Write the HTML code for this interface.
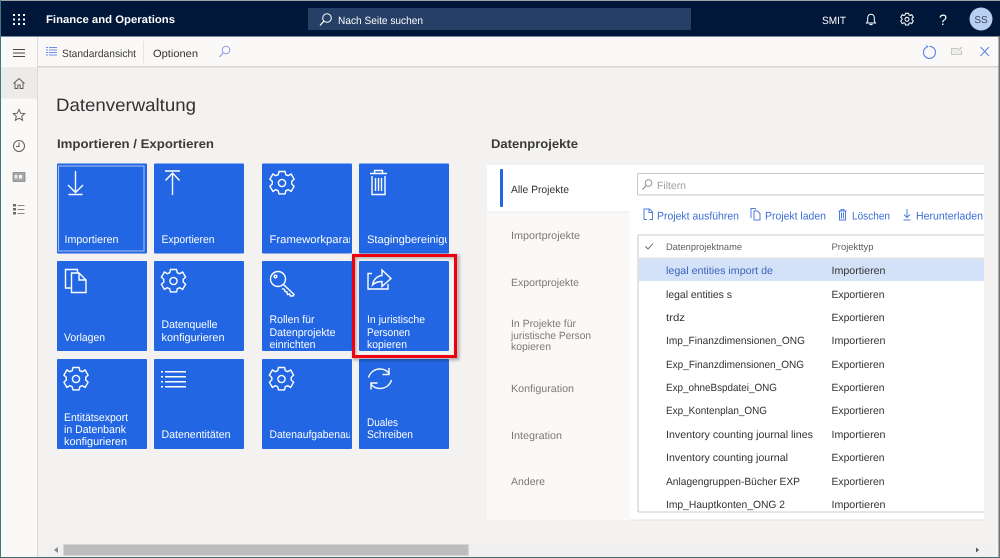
<!DOCTYPE html>
<html><head><meta charset="utf-8"><style>
html,body{margin:0;padding:0;background:#f3f2f1}
svg{display:block;font-family:"Liberation Sans",sans-serif;filter:blur(.3px)}
.w text{fill:#fff;font-size:11px}
.n{fill:#323130;font-size:10.5px}
.t{fill:#7a7876;font-size:10.5px}
.c{fill:#3d6cd6;font-size:11px}
.h{fill:#605e5c;font-size:9.5px}
.i{fill:none;stroke:#fff;stroke-width:1.4}
.s{fill:none;stroke:#605e5c;stroke-width:1}
.b{fill:none;stroke:#4f7ae0;stroke-width:1}
</style></head><body>
<svg width="1000" height="558" viewBox="0 0 1000 558" xmlns="http://www.w3.org/2000/svg" text-rendering="geometricPrecision">
<defs>
<clipPath id="c3"><rect x="262" y="163" width="88" height="90"/></clipPath>
<clipPath id="c4"><rect x="359" y="163" width="88" height="90"/></clipPath>
<clipPath id="c5"><rect x="262" y="359" width="88" height="90"/></clipPath>
<clipPath id="tb"><rect x="638" y="235" width="346" height="277"/></clipPath>
<filter id="sh" x="-20%" y="-20%" width="140%" height="140%"><feGaussianBlur stdDeviation="1.5"/></filter>
<g id="gear" fill="none" stroke="#fff" stroke-width="1.4">
<path d="M-3-11.500h6l.8 3.200 2.400 1 2.900-1.700 3 5.100-2.400 2.300v2.600l2.400 2.300-3 5.100-2.900-1.700-2.400 1-.8 3.200h-6l-.8-3.200-2.400-1-2.900 1.700-3-5.100 2.400-2.300v-2.600l-2.400-2.300 3-5.100 2.900 1.700 2.400-1z"/>
<circle r="3.600"/>
</g>
</defs>

<rect width="1000" height="558" fill="#f3f2f1"/>

<!-- header -->
<rect x="0" y="0" width="1000" height="1" fill="#9aa5a8"/>
<rect x="0" y="1" width="1000" height="35.500" fill="#00173a"/>
<g fill="#fff">
<rect x="13" y="14" width="2" height="2"/><rect x="18" y="14" width="2" height="2"/><rect x="23" y="14" width="2" height="2"/>
<rect x="13" y="18.500" width="2" height="2"/><rect x="18" y="18.500" width="2" height="2"/><rect x="23" y="18.500" width="2" height="2"/>
<rect x="13" y="23" width="2" height="2"/><rect x="18" y="23" width="2" height="2"/><rect x="23" y="23" width="2" height="2"/>
</g>
<text x="46" y="23" fill="#fff" font-size="11" font-weight="bold" textLength="129" lengthAdjust="spacingAndGlyphs">Finance and Operations</text>
<rect x="308" y="8" width="383" height="22" fill="#263f66"/>
<circle cx="327" cy="18" r="4.300" fill="none" stroke="#fff" stroke-width="1"/>
<path d="M323.800 21.200L320 25.500" stroke="#fff" stroke-width="1.200"/>
<text x="338" y="24" fill="#fff" font-size="10.500" textLength="85" lengthAdjust="spacingAndGlyphs">Nach Seite suchen</text>
<text x="822" y="24" fill="#fff" font-size="10.500" textLength="24" lengthAdjust="spacingAndGlyphs">SMIT</text>
<path d="M866.500 23h9l-1.200-2v-3.500a3.300 3.300 0 0 0-6.600 0V21z" fill="none" stroke="#fff" stroke-width="1"/>
<path d="M869.500 24.500h3" stroke="#fff" stroke-width="1.200"/>
<g transform="translate(907 19.300) scale(.52)" fill="none" stroke="#fff" stroke-width="2">
<path d="M-3-11.500h6l.8 3.200 2.400 1 2.900-1.700 3 5.100-2.400 2.300v2.600l2.400 2.300-3 5.100-2.900-1.700-2.400 1-.8 3.200h-6l-.8-3.200-2.400-1-2.900 1.700-3-5.100 2.400-2.300v-2.600l-2.400-2.300 3-5.100 2.900 1.700 2.400-1z"/><circle r="3.800"/></g>
<text x="939" y="25" fill="#fff" font-size="15" textLength="8" lengthAdjust="spacingAndGlyphs">?</text>
<circle cx="981" cy="19" r="11.500" fill="#b9cff2"/>
<text x="981" y="23" fill="#3b4a63" font-size="10" text-anchor="middle">SS</text>

<!-- toolbar -->
<rect x="1" y="36.500" width="999" height="30" fill="#faf9f8"/>
<rect x="37" y="66" width="963" height="1.500" fill="#d6d4d2"/>
<g fill="#6f8fe8"><rect x="46" y="47" width="2" height="1"/><rect x="49" y="47" width="8" height="1"/><rect x="46" y="49.500" width="2" height="1"/><rect x="49" y="49.500" width="8" height="1"/><rect x="46" y="52" width="2" height="1"/><rect x="49" y="52" width="8" height="1"/><rect x="46" y="54.500" width="2" height="1"/><rect x="49" y="54.500" width="8" height="1"/></g>
<text x="62" y="57" fill="#3b3a39" font-size="10.500" textLength="74" lengthAdjust="spacingAndGlyphs">Standardansicht</text>
<rect x="143" y="41" width="1" height="22" fill="#e6e4e2"/>
<text x="153" y="57" fill="#323130" font-size="10.500" textLength="45" lengthAdjust="spacingAndGlyphs">Optionen</text>
<circle cx="226" cy="50" r="3.800" fill="none" stroke="#8f96ea" stroke-width="1"/>
<path d="M223 53L219.500 57" stroke="#8f96ea" stroke-width="1.100"/>
<!-- right toolbar icons -->
<path d="M926 47.500a6 6 0 1 0 3.500-1.100" fill="none" stroke="#5f8ae6" stroke-width="1.200"/>
<path d="M926 45l2.500 1.500-2 2z" fill="#5f8ae6"/>
<path d="M958.500 48.500h-7v6h10v-4" fill="#ececea" stroke="#c9c8c6" stroke-width="1"/>
<path d="M959 50l3-3" stroke="#b8b7b5" stroke-width="1"/>
<path d="M980.500 47l8.500 9M989 47l-8.500 9" stroke="#5f8ae6" stroke-width="1.100"/>

<!-- left nav -->
<rect x="1" y="36.500" width="36" height="521" fill="#faf9f8"/>
<rect x="37" y="36.500" width="1" height="521" fill="#dcdad8"/>
<rect x="1" y="67" width="36" height="31.500" fill="#edebe9"/>
<rect x="13" y="49" width="12" height="1" fill="#4a4948"/><rect x="13" y="52.500" width="12" height="1" fill="#4a4948"/><rect x="13" y="56" width="12" height="1" fill="#4a4948"/>
<path d="M13.500 83.500l5.500-5 5.500 5M15 82v6.500h2.800v-3.500h2.400v3.500H23V82" class="s"/>
<path d="M19 109.500l1.700 3.700 4 .4-3 2.700.9 4-3.600-2.100-3.600 2.100.9-4-3-2.700 4-.4z" class="s"/>
<circle cx="19" cy="146" r="5.500" class="s"/><path d="M19 142.500V146.500h-3" class="s"/>
<rect x="13" y="172.500" width="12" height="9" fill="#a8a8a8" stroke="#6e6d6c" stroke-width=".6"/><rect x="19" y="175" width="3" height="3.500" fill="#faf9f8"/><rect x="14.500" y="175" width="3" height="3.500" fill="#e8e8e8"/>
<g fill="#6e6d6c"><rect x="13" y="204" width="3" height="2.500"/><rect x="13" y="208" width="3" height="2.500"/><rect x="13" y="212" width="3" height="2.500"/></g>
<g fill="#8a8988"><rect x="17.500" y="205" width="7" height="1"/><rect x="17.500" y="209" width="7" height="1"/><rect x="17.500" y="213" width="7" height="1"/></g>

<!-- headings -->
<text x="56" y="111" fill="#323130" font-size="18" textLength="140" lengthAdjust="spacingAndGlyphs">Datenverwaltung</text>
<text x="57" y="148" fill="#3b3a39" font-size="12.500" font-weight="bold" textLength="157" lengthAdjust="spacingAndGlyphs">Importieren / Exportieren</text>
<text x="491" y="148" fill="#3b3a39" font-size="12.500" font-weight="bold" textLength="87" lengthAdjust="spacingAndGlyphs">Datenprojekte</text>

<!-- tiles -->
<g fill="#2266e3">
<rect x="57" y="163.500" width="90" height="90" rx="1"/><rect x="154" y="163.500" width="90" height="90" rx="1"/><rect x="262" y="163.500" width="90" height="90" rx="1"/><rect x="359" y="163.500" width="90" height="90" rx="1"/>
<rect x="57" y="261" width="90" height="90" rx="1"/><rect x="154" y="261" width="90" height="90" rx="1"/><rect x="262" y="261" width="90" height="90" rx="1"/><rect x="359" y="261" width="90" height="90" rx="1"/>
<rect x="57" y="359" width="90" height="90" rx="1"/><rect x="154" y="359" width="90" height="90" rx="1"/><rect x="262" y="359" width="90" height="90" rx="1"/><rect x="359" y="359" width="90" height="90" rx="1"/>
</g>
<rect x="58.500" y="166" width="85.500" height="85" fill="none" stroke="#a9c4f5" stroke-width="1"/>

<g class="w">
<text x="64.500" y="243" textLength="54" lengthAdjust="spacingAndGlyphs">Importieren</text>
<text x="161.500" y="243" textLength="53" lengthAdjust="spacingAndGlyphs">Exportieren</text>
<text x="269.500" y="243" clip-path="url(#c3)" textLength="108" lengthAdjust="spacingAndGlyphs">Frameworkparameter</text>
<text x="367" y="243" clip-path="url(#c4)" textLength="96" lengthAdjust="spacingAndGlyphs">Stagingbereinigung</text>
<text x="64" y="341" textLength="41" lengthAdjust="spacingAndGlyphs">Vorlagen</text>
<text x="161.500" y="328" textLength="56" lengthAdjust="spacingAndGlyphs">Datenquelle</text>
<text x="161.500" y="341" textLength="63" lengthAdjust="spacingAndGlyphs">konfigurieren</text>
<text x="269.500" y="323" textLength="45" lengthAdjust="spacingAndGlyphs">Rollen für</text>
<text x="269.500" y="336" textLength="66" lengthAdjust="spacingAndGlyphs">Datenprojekte</text>
<text x="269.500" y="348" textLength="46" lengthAdjust="spacingAndGlyphs">einrichten</text>
<text x="367" y="323" textLength="58" lengthAdjust="spacingAndGlyphs">In juristische</text>
<text x="367" y="336" textLength="43" lengthAdjust="spacingAndGlyphs">Personen</text>
<text x="367" y="348" textLength="40" lengthAdjust="spacingAndGlyphs">kopieren</text>
<text x="64" y="421" textLength="64" lengthAdjust="spacingAndGlyphs">Entitätsexport</text>
<text x="64" y="433" textLength="62" lengthAdjust="spacingAndGlyphs">in Datenbank</text>
<text x="64" y="445" textLength="63" lengthAdjust="spacingAndGlyphs">konfigurieren</text>
<text x="161.500" y="438" textLength="69" lengthAdjust="spacingAndGlyphs">Datenentitäten</text>
<text x="269.500" y="438" clip-path="url(#c5)" textLength="122" lengthAdjust="spacingAndGlyphs">Datenaufgabenausführung</text>
<text x="367" y="426" textLength="31" lengthAdjust="spacingAndGlyphs">Duales</text>
<text x="367" y="438" textLength="46" lengthAdjust="spacingAndGlyphs">Schreiben</text>
</g>

<!-- tile icons -->
<path class="i" d="M75.500 171v21M68 185l7.500 7.500L83 185M68.500 194.500h14"/>
<path class="i" d="M165 171h15M172.500 195V173M165.500 180.500l7-7.500 7 7.500"/>
<use href="#gear" x="282" y="183"/>
<path class="i" d="M370 173.500h17M372 176v18.500h13V176M375.500 178v13M378.500 178v13M381.500 178v13M374.500 173v-2.500h8v2.500"/>
<path class="i" d="M71.500 288H65.500V269.500H77.500V273M71.500 273H79l7 7v12.500H71.500zM79 273v7h7"/>
<use href="#gear" x="173.500" y="281"/>
<g class="i"><circle cx="278" cy="279" r="7.500"/><circle cx="275.500" cy="276.500" r="1.300"/><path d="M283.500 284.500l10.500 10-1 1.500h-2.500l-1-2-2 .5-.5-2.500-2-.5-.5-2-2.500-1"/></g>
<path class="i" d="M372 273.500h-4v15.500h20v-5M372.500 285c1-6 5-9 9.500-9.500v-5.500l9 8.500-9 8v-5c-4 0-7 1-9.500 3.500z"/>
<use href="#gear" x="76" y="379"/>
<g fill="#fff"><rect x="161" y="371" width="2" height="1.500"/><rect x="165" y="371" width="21" height="1.500"/><rect x="161" y="376" width="2" height="1.500"/><rect x="165" y="376" width="21" height="1.500"/><rect x="161" y="381" width="2" height="1.500"/><rect x="165" y="381" width="21" height="1.500"/><rect x="161" y="386" width="2" height="1.500"/><rect x="165" y="386" width="21" height="1.500"/></g>
<use href="#gear" x="281.500" y="379"/>
<path class="i" d="M368.500 377.500c1.500-5 6-8.500 11.500-8.500 4 0 7.500 2 9.500 5M389 368v6.500h-6.500M391.500 380c-1.500 5-6 8.500-11.500 8.500-4 0-7.500-2-9.500-5M371 389.500V383h6.500"/>

<!-- red highlight -->
<rect x="354.500" y="256.500" width="103" height="102" fill="none" stroke="#000" stroke-opacity=".35" stroke-width="3" filter="url(#sh)"/>
<rect x="353.500" y="255.500" width="102" height="101" fill="none" stroke="#ee0010" stroke-width="3"/>

<!-- right panel -->
<rect x="630" y="165" width="354" height="355" fill="#fff"/>
<rect x="487" y="165" width="143" height="355" fill="#faf9f8"/>
<rect x="487" y="165" width="143" height="47" fill="#fff"/>
<rect x="630" y="519.500" width="354" height="1" fill="#e4e3e1"/>
<rect x="487" y="211.500" width="143" height="1" fill="#e9e8e6"/>
<rect x="500" y="169" width="3" height="38" rx="1" fill="#2266e3"/>
<text x="511" y="193" fill="#323130" font-size="10.500" textLength="58" lengthAdjust="spacingAndGlyphs">Alle Projekte</text>
<text class="t" x="511" y="239" textLength="69" lengthAdjust="spacingAndGlyphs">Importprojekte</text>
<text class="t" x="511" y="286" textLength="68" lengthAdjust="spacingAndGlyphs">Exportprojekte</text>
<text class="t" x="511" y="327" textLength="65" lengthAdjust="spacingAndGlyphs">In Projekte für</text>
<text class="t" x="511" y="339" textLength="80" lengthAdjust="spacingAndGlyphs">juristische Person</text>
<text class="t" x="511" y="350" textLength="40" lengthAdjust="spacingAndGlyphs">kopieren</text>
<text class="t" x="511" y="392" textLength="63" lengthAdjust="spacingAndGlyphs">Konfiguration</text>
<text class="t" x="511" y="439" textLength="51" lengthAdjust="spacingAndGlyphs">Integration</text>
<text class="t" x="511" y="485" textLength="34" lengthAdjust="spacingAndGlyphs">Andere</text>

<!-- filter -->
<path d="M984 173.500H638.500a1 1 0 0 0-1 1V194a1 1 0 0 0 1 1H984" fill="#fff" stroke="#c8c6c4" stroke-width="1"/>
<circle cx="648.500" cy="183" r="3.300" fill="none" stroke="#8a8886" stroke-width=".9"/>
<path d="M646 185.500L642.500 189.500" stroke="#8a8886" stroke-width="1"/>
<text x="657" y="189" fill="#a19f9d" font-size="10.500" textLength="29" lengthAdjust="spacingAndGlyphs">Filtern</text>

<!-- commands -->
<path class="b" d="M644 219.500v-10.500h5.500l3 3v7.500h-3M649 209v3.500h3.500M644 219.500h3"/>
<text class="c" x="657" y="219.500" textLength="82" lengthAdjust="spacingAndGlyphs">Projekt ausführen</text>
<path class="b" d="M751 218v-9.500h4l1 1M754 211h3.500l2.500 2.500v6.500h-6z"/>
<text class="c" x="765" y="219.500" textLength="61" lengthAdjust="spacingAndGlyphs">Projekt laden</text>
<path class="b" d="M838.500 211h8M839.500 211v9h6v-9M841.500 212.500v6M843.500 212.500v6M841 211v-1.500h3V211"/>
<text class="c" x="852" y="219.500" textLength="38" lengthAdjust="spacingAndGlyphs">Löschen</text>
<path class="b" d="M907 209v8M904 214.500l3 3 3-3M903.500 220h7"/>
<text class="c" x="916" y="219.500" textLength="67" lengthAdjust="spacingAndGlyphs">Herunterladen</text>

<!-- table -->
<rect x="638" y="235" width="346" height="277" fill="#fff"/>
<rect x="638" y="234.500" width="346" height="1" fill="#cfcdcb"/>
<rect x="637.500" y="235" width="1" height="277" fill="#c8c6c4"/>
<rect x="638" y="511.500" width="346" height="1" fill="#cfcdcb"/>
<rect x="638" y="257.500" width="346" height="1.500" fill="#e1dfdd"/>
<path d="M645.500 246.500l2.500 2.500 5-5.500" fill="none" stroke="#605e5c" stroke-width=".9"/>
<text class="h" x="666" y="250" textLength="76" lengthAdjust="spacingAndGlyphs">Datenprojektname</text>
<text class="h" x="831.500" y="250" textLength="42" lengthAdjust="spacingAndGlyphs">Projekttyp</text>
<rect x="639" y="259" width="345" height="22" fill="#d4e2f9"/>
<g clip-path="url(#tb)">
<text x="666" y="274" fill="#3a62b8" font-size="10.500" textLength="107" lengthAdjust="spacingAndGlyphs">legal entities import de</text>
<text class="n" x="831.500" y="274" textLength="54" lengthAdjust="spacingAndGlyphs">Importieren</text>
<text class="n" x="666" y="298" textLength="66" lengthAdjust="spacingAndGlyphs">legal entities s</text>
<text class="n" x="831.500" y="298" textLength="53" lengthAdjust="spacingAndGlyphs">Exportieren</text>
<text class="n" x="666" y="321" textLength="19" lengthAdjust="spacingAndGlyphs">trdz</text>
<text class="n" x="831.500" y="321" textLength="53" lengthAdjust="spacingAndGlyphs">Exportieren</text>
<text class="n" x="666" y="344" textLength="139" lengthAdjust="spacingAndGlyphs">Imp_Finanzdimensionen_ONG</text>
<text class="n" x="831.500" y="344" textLength="54" lengthAdjust="spacingAndGlyphs">Importieren</text>
<text class="n" x="666" y="368" textLength="138" lengthAdjust="spacingAndGlyphs">Exp_Finanzdimensionen_ONG</text>
<text class="n" x="831.500" y="368" textLength="53" lengthAdjust="spacingAndGlyphs">Exportieren</text>
<text class="n" x="666" y="391" textLength="111" lengthAdjust="spacingAndGlyphs">Exp_ohneBspdatei_ONG</text>
<text class="n" x="831.500" y="391" textLength="53" lengthAdjust="spacingAndGlyphs">Exportieren</text>
<text class="n" x="666" y="414" textLength="101" lengthAdjust="spacingAndGlyphs">Exp_Kontenplan_ONG</text>
<text class="n" x="831.500" y="414" textLength="53" lengthAdjust="spacingAndGlyphs">Exportieren</text>
<text class="n" x="666" y="438" textLength="147" lengthAdjust="spacingAndGlyphs">Inventory counting journal lines</text>
<text class="n" x="831.500" y="438" textLength="54" lengthAdjust="spacingAndGlyphs">Importieren</text>
<text class="n" x="666" y="461" textLength="122" lengthAdjust="spacingAndGlyphs">Inventory counting journal</text>
<text class="n" x="831.500" y="461" textLength="53" lengthAdjust="spacingAndGlyphs">Exportieren</text>
<text class="n" x="666" y="485" textLength="134" lengthAdjust="spacingAndGlyphs">Anlagengruppen-Bücher EXP</text>
<text class="n" x="831.500" y="485" textLength="53" lengthAdjust="spacingAndGlyphs">Exportieren</text>
<text class="n" x="666" y="508" textLength="119" lengthAdjust="spacingAndGlyphs">Imp_Hauptkonten_ONG 2</text>
<text class="n" x="831.500" y="508" textLength="54" lengthAdjust="spacingAndGlyphs">Importieren</text>
</g>

<!-- scrollbar -->
<rect x="50" y="544" width="945" height="13" fill="#f0f0f0"/>
<rect x="63.500" y="544.500" width="405" height="11" fill="#bdbdbd" stroke="#d6d6d6" stroke-width="1"/>
<path d="M54 550l4-3v6z" fill="#8a8a8a"/>
<path d="M979 550l-3-2.500v5z" fill="#555"/>

<!-- window edge -->
<rect x="0" y="0" width="1" height="558" fill="#3f7a80"/>
<rect x="0" y="557" width="1000" height="1" fill="#3f6f73"/>
<rect x="998.500" y="36" width="1.500" height="522" fill="#6f6f6f"/>
</svg>
</body></html>
